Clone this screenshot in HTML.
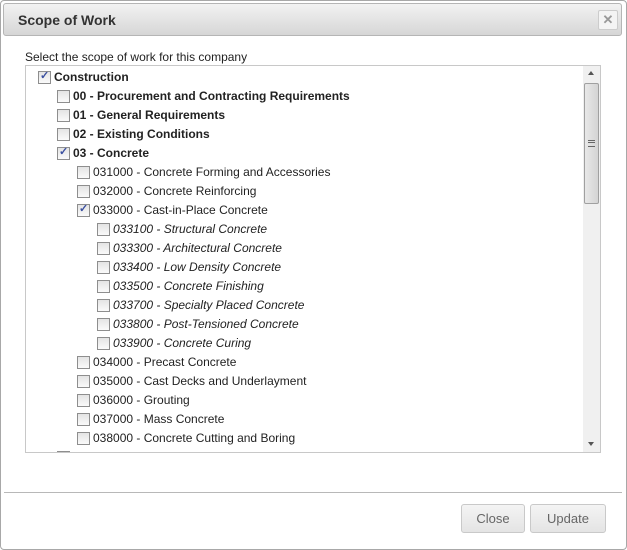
<!DOCTYPE html>
<html><head><style>
body{margin:0;width:627px;height:550px;background:#fff;font-family:"Liberation Sans",Arial,sans-serif;position:relative;overflow:hidden}
.dlg{position:absolute;left:0;top:0;width:625px;height:548px;border:1px solid #a8a8a8;border-radius:4px;background:#fff}
.tb{position:absolute;left:3px;top:3px;width:617px;height:31px;border:1px solid #b5b5b5;border-radius:3px;background:linear-gradient(#f2f2f2,#d6d6d6)}
.tb span{position:absolute;left:14px;top:8px;font-size:14px;font-weight:bold;color:#333}
.x{position:absolute;left:594px;top:6px;width:18px;height:18px;border:1px solid #ccc;border-radius:2px;background:#f4f4f4;color:#999;font-size:13px;font-weight:bold;text-align:center;line-height:18px}
.lbl{position:absolute;left:25px;top:50px;font-size:12px;color:#222}
.box{position:absolute;left:25px;top:65px;width:574px;height:386px;border:1px solid #c8c8c8;overflow:hidden}
.row{position:absolute;height:19px;font-size:12px;color:#222;white-space:nowrap;line-height:19px;margin-top:1px}
.cb{position:absolute;top:3px;left:0;width:11px;height:11px;border:1px solid #8e8e8e;background:linear-gradient(#e4e4e4,#fafafa)}
.cb.c::after{content:"✓";position:absolute;left:1px;top:-5px;font-size:11px;color:#3a4fa0;font-weight:bold}
.t{position:absolute;left:16px;top:0}
.b{font-weight:bold}.i{font-style:italic}
.sb{position:absolute;left:557px;top:0;width:17px;height:386px;background:#f0f0f0}
.th{position:absolute;left:1px;top:17px;width:13px;height:119px;border:1px solid #a0a0a0;border-radius:2px;background:linear-gradient(90deg,#e8e8e8,#d4d4d4)}
.ft{position:absolute;left:4px;top:492px;width:618px;height:1px;background:#b8b8b8}
.btn{position:absolute;top:504px;height:27px;border:1px solid #c9c9c9;border-radius:3px;background:linear-gradient(#f4f4f4,#e4e4e4);color:#666;font-size:13px;text-align:center;line-height:27px}
</style></head><body>
<div class="dlg"></div>
<div class="tb"><span>Scope of Work</span><div class="x">✕</div></div>
<div class="lbl">Select the scope of work for this company</div>
<div class="box">
<div class="row" style="left:12px;top:1px"><div class="cb c"></div><span class="t b">Construction</span></div>
<div class="row" style="left:31px;top:20px"><div class="cb"></div><span class="t b">00 - Procurement and Contracting Requirements</span></div>
<div class="row" style="left:31px;top:39px"><div class="cb"></div><span class="t b">01 - General Requirements</span></div>
<div class="row" style="left:31px;top:58px"><div class="cb"></div><span class="t b">02 - Existing Conditions</span></div>
<div class="row" style="left:31px;top:77px"><div class="cb c"></div><span class="t b">03 - Concrete</span></div>
<div class="row" style="left:51px;top:96px"><div class="cb"></div><span class="t">031000 - Concrete Forming and Accessories</span></div>
<div class="row" style="left:51px;top:115px"><div class="cb"></div><span class="t">032000 - Concrete Reinforcing</span></div>
<div class="row" style="left:51px;top:134px"><div class="cb c"></div><span class="t">033000 - Cast-in-Place Concrete</span></div>
<div class="row" style="left:71px;top:153px"><div class="cb"></div><span class="t i">033100 - Structural Concrete</span></div>
<div class="row" style="left:71px;top:172px"><div class="cb"></div><span class="t i">033300 - Architectural Concrete</span></div>
<div class="row" style="left:71px;top:191px"><div class="cb"></div><span class="t i">033400 - Low Density Concrete</span></div>
<div class="row" style="left:71px;top:210px"><div class="cb"></div><span class="t i">033500 - Concrete Finishing</span></div>
<div class="row" style="left:71px;top:229px"><div class="cb"></div><span class="t i">033700 - Specialty Placed Concrete</span></div>
<div class="row" style="left:71px;top:248px"><div class="cb"></div><span class="t i">033800 - Post-Tensioned Concrete</span></div>
<div class="row" style="left:71px;top:267px"><div class="cb"></div><span class="t i">033900 - Concrete Curing</span></div>
<div class="row" style="left:51px;top:286px"><div class="cb"></div><span class="t">034000 - Precast Concrete</span></div>
<div class="row" style="left:51px;top:305px"><div class="cb"></div><span class="t">035000 - Cast Decks and Underlayment</span></div>
<div class="row" style="left:51px;top:324px"><div class="cb"></div><span class="t">036000 - Grouting</span></div>
<div class="row" style="left:51px;top:343px"><div class="cb"></div><span class="t">037000 - Mass Concrete</span></div>
<div class="row" style="left:51px;top:362px"><div class="cb"></div><span class="t">038000 - Concrete Cutting and Boring</span></div>
<div class="row" style="left:31px;top:381px"><div class="cb"></div></div>
<div class="sb"><div style="position:absolute;left:5px;top:5px;border:3px solid transparent;border-bottom:4px solid #555;border-top:0"></div><div class="th"><div style="position:absolute;left:3px;top:56px;width:7px;height:5px;border-top:1px solid #666;border-bottom:1px solid #666"></div><div style="position:absolute;left:3px;top:58px;width:7px;height:1px;background:#666"></div></div><div style="position:absolute;left:5px;top:376px;border:3px solid transparent;border-top:4px solid #555;border-bottom:0"></div></div>
</div>
<div class="ft"></div>
<div class="btn" style="left:461px;width:62px">Close</div>
<div class="btn" style="left:530px;width:74px">Update</div>
</body></html>
